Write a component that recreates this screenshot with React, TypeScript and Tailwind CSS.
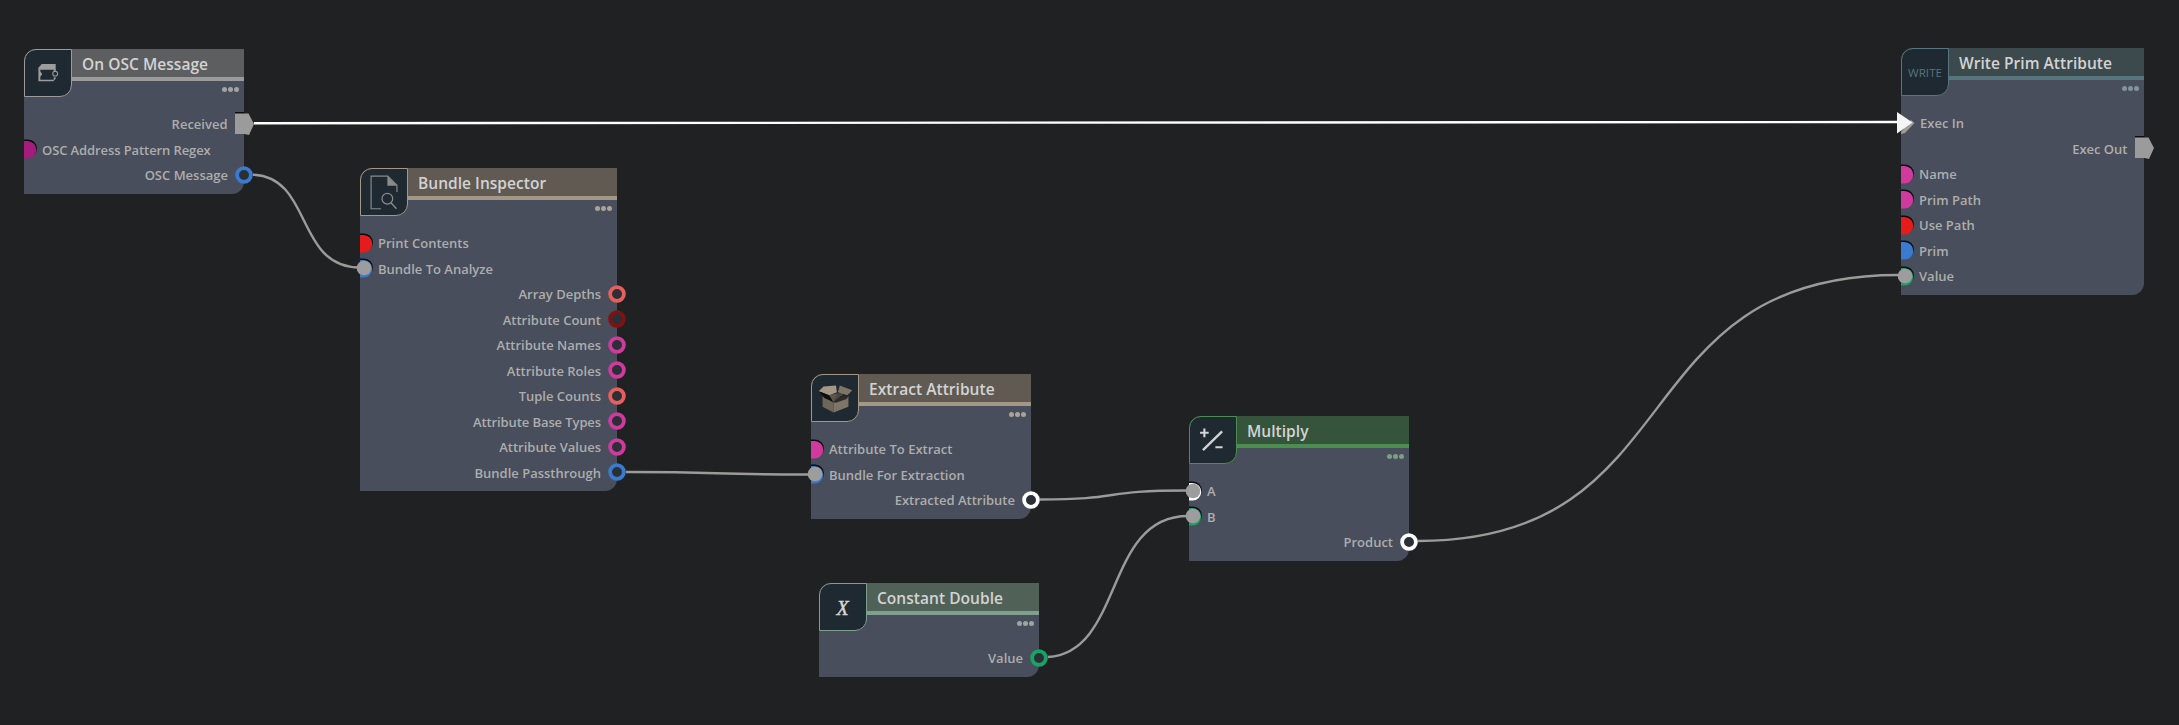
import React from "react";

type Port = {
  label: string;
  side: "in" | "out";
  color?: string;
  exec?: boolean;
  linked?: boolean;
  tight?: boolean;
};
type NodeDef = {
  title: string;
  place: string;
  head: string;
  strip: string;
  edge: string;
  dots: string;
  icon: React.ReactNode;
  ports: Port[];
};

const OscIcon = () => (
  <svg width="48" height="48" viewBox="0 0 48 48" fill="none">
    <path d="M14 18.500L17.500 14.500H32V20.500H14Z" fill="#9d9d9d" />
    <path d="M14 20H16V22.500L18 25L16 28V31H30V28.500H32V30L29.500 32.500H14Z" fill="#9d9d9d" />
    <path d="M30 20H32V22.500H30Z" fill="#9d9d9d" />
    <circle cx="31.500" cy="24.700" r="2.500" stroke="#9d9d9d" strokeWidth="1.100" />
  </svg>
);
const InspectIcon = () => (
  <svg width="48" height="48" viewBox="0 0 48 48" fill="none" stroke="#8b8b8b">
    <path d="M21 41.500H10.500V7.500H28L37.500 17V24" strokeWidth="1.200" />
    <path d="M27.500 7.500V17.500H37.500Z" fill="#8b8b8b" stroke="none" />
    <circle cx="27.500" cy="31" r="5.600" strokeWidth="1.300" />
    <path d="M31.500 35.500L37 41.500" strokeWidth="1.400" />
  </svg>
);
const BoxIcon = () => (
  <svg width="48" height="48" viewBox="0 0 48 48">
    <path d="M11 22L22.500 29V39L11 33Z" fill="#6f665a" />
    <path d="M22.500 29L38 22V33L22.500 39Z" fill="#7f7566" />
    <path d="M12 18L24 20L36 17L22.500 29Z" fill="#4b463f" />
    <path d="M7 17L12 12L25 11L26 18L18 21Z" fill="#a39885" />
    <path d="M29 11L42 16L37 21L27 18Z" fill="#7f7566" />
    <path d="M7 17L18 21L22 28L13 24Z" fill="#0e0e0e" />
    <path d="M18 21L27 19L22.500 28Z" fill="#5c554b" />
    <path d="M22.500 28L30 22L39 21L36 25L25 29Z" fill="#2d2a27" />
  </svg>
);
const MathIcon = () => (
  <svg width="48" height="48" viewBox="0 0 48 48" stroke="#d4d4d4" fill="none">
    <path d="M10.500 16.500H19.500M15 12V21M26.500 31.500H34" strokeWidth="2.200" />
    <path d="M13.500 34.500L33.500 15" strokeWidth="2.400" />
  </svg>
);

const nodes: NodeDef[] = [
  {
    title: "On OSC Message", place: "left-[24px] top-[49px] w-[220px] h-[145px]",
    head: "bg-[#5d5e5f]", strip: "bg-[#9b9b9b]", edge: "border-[#9b9b9b]", dots: "bg-[#a3a3a3]", icon: <OscIcon />,
    ports: [
      { label: "Received", side: "out", exec: true },
      { label: "OSC Address Pattern Regex", side: "in", color: "#a61c7c", tight: true },
      { label: "OSC Message", side: "out", color: "#3a7bd0" },
    ],
  },
  {
    title: "Bundle Inspector", place: "left-[360px] top-[168px] w-[257px] h-[323px]",
    head: "bg-[#605a53]", strip: "bg-[#a39885]", edge: "border-[#a39885]", dots: "bg-[#aaa498]", icon: <InspectIcon />,
    ports: [
      { label: "Print Contents", side: "in", color: "#e61c1c" },
      { label: "Bundle To Analyze", side: "in", color: "#3a7bd0", linked: true },
      { label: "Array Depths", side: "out", color: "#e65e5e" },
      { label: "Attribute Count", side: "out", color: "#7e1212" },
      { label: "Attribute Names", side: "out", color: "#cf3a9c" },
      { label: "Attribute Roles", side: "out", color: "#cf3a9c" },
      { label: "Tuple Counts", side: "out", color: "#e65e5e" },
      { label: "Attribute Base Types", side: "out", color: "#cf3a9c", tight: true },
      { label: "Attribute Values", side: "out", color: "#cf3a9c" },
      { label: "Bundle Passthrough", side: "out", color: "#3a7bd0" },
    ],
  },
  {
    title: "Extract Attribute", place: "left-[811px] top-[374px] w-[220px] h-[145px]",
    head: "bg-[#605a53]", strip: "bg-[#a39885]", edge: "border-[#a39885]", dots: "bg-[#aaa498]", icon: <BoxIcon />,
    ports: [
      { label: "Attribute To Extract", side: "in", color: "#cf3a9c" },
      { label: "Bundle For Extraction", side: "in", color: "#3a7bd0", linked: true },
      { label: "Extracted Attribute", side: "out", color: "#ffffff" },
    ],
  },
  {
    title: "Constant Double", place: "left-[819px] top-[583px] w-[220px] h-[94px]",
    head: "bg-[#506157]", strip: "bg-[#7fa08d]", edge: "border-[#7fa08d]", dots: "bg-[#98a89f]",
    icon: <span className="pt-[2px] pr-[1px] font-['Liberation_Serif',serif] text-[20px] italic text-[#d8d8d8] [-webkit-text-stroke:0.4px_#d8d8d8]">X</span>,
    ports: [{ label: "Value", side: "out", color: "#1aa367" }],
  },
  {
    title: "Multiply", place: "left-[1189px] top-[416px] w-[220px] h-[145px]",
    head: "bg-[#36533b]", strip: "bg-[#4c8d50]", edge: "border-[#4c8d50]", dots: "bg-[#7c9f84]", icon: <MathIcon />,
    ports: [
      { label: "A", side: "in", color: "#ffffff", linked: true },
      { label: "B", side: "in", color: "#1aa367", linked: true },
      { label: "Product", side: "out", color: "#ffffff" },
    ],
  },
  {
    title: "Write Prim Attribute", place: "left-[1901px] top-[48px] w-[243px] h-[247px]",
    head: "bg-[#3c4a4e]", strip: "bg-[#57757c]", edge: "border-[#57757c]", dots: "bg-[#82959c]",
    icon: <span className="pt-[2px] text-[11.500px] tracking-[0.100px] text-[#55757e]">WRITE</span>,
    ports: [
      { label: "Exec In", side: "in", exec: true },
      { label: "Exec Out", side: "out", exec: true },
      { label: "Name", side: "in", color: "#cf3a9c" },
      { label: "Prim Path", side: "in", color: "#cf3a9c" },
      { label: "Use Path", side: "in", color: "#e61c1c" },
      { label: "Prim", side: "in", color: "#3a7bd0" },
      { label: "Value", side: "in", color: "#1aa367", linked: true },
    ],
  },
];

function Pin({ port }: { port: Port }) {
  if (port.exec && port.side === "in")
    return (
      <svg className="-ml-1 h-6 w-[23px] shrink-0" viewBox="0 0 23 24">
        <path d="M4 21V23L8 22L17.500 12L14 9Z" fill="#a09c98" />
        <path d="M0 1L15.500 11.500L0 22.500Z" fill="#f4f4f4" />
      </svg>
    );
  if (port.exec)
    return (
      <svg className="-mr-[9.500px] h-6 w-[19px] shrink-0" viewBox="0 0 19 24">
        <path d="M0 0H9.500V2H0Z" fill="#0d0d0f" />
        <path d="M0 1.500H13.500L19 12L14 23L9.500 22H0Z" fill="#9b9b9b" />
      </svg>
    );
  if (port.side === "out")
    return (
      <svg className="-mr-[9px] h-[18px] w-[18px] shrink-0" viewBox="0 0 18 18">
        <circle cx="9" cy="9" r="6.900" fill="#2b3036" stroke={port.color} strokeWidth="3.800" />
      </svg>
    );
  return (
    <svg className="-ml-1 h-[22px] w-[22px] shrink-0" viewBox="0 0 22 22">
      <path d="M4 1.500H8A8.900 8.900 0 0 1 8 19.300H4Z" fill="#0b0b10" />
      <path d="M4 3H7.500A8.800 8.800 0 0 1 7.500 20.600H4Z" fill={port.color} />
      {port.linked && <circle cx="8" cy="11" r="7.300" fill="#9d9d9d" />}
    </svg>
  );
}

function GraphNode({ node }: { node: NodeDef }) {
  return (
    <section className={`absolute flex flex-col rounded-tl-[12px] rounded-br-[12px] bg-[#484e5b] ${node.place}`}>
      <div className="flex h-[62px] shrink-0">
        <div className={`flex size-12 shrink-0 items-center justify-center rounded-tl-[12px] rounded-br-[12px] border bg-[#1f2931] ${node.edge}`}>
          {node.icon}
        </div>
        <div className="flex flex-1 flex-col">
          <h2 className={`h-7 pl-[10px] text-[15.500px] leading-[30px] font-semibold tracking-[0.040px] whitespace-nowrap text-[#d3d3d3] ${node.head}`}>{node.title}</h2>
          <div className={`h-1 ${node.strip}`} />
          <div className="mt-[6px] mr-[5.500px] flex justify-end gap-[1px]">
            <i className={`size-[5px] rounded-full ${node.dots}`} />
            <i className={`size-[5px] rounded-full ${node.dots}`} />
            <i className={`size-[5px] rounded-full ${node.dots}`} />
          </div>
        </div>
      </div>
      {node.ports.map((p) => (
        <div key={p.label} className={`flex h-[25.500px] shrink-0 items-center ${p.side === "out" ? "flex-row-reverse gap-[7px]" : ""}`}>
          <Pin port={p} />
          <span className={`mt-[0.600px] text-[13px] leading-5 font-semibold whitespace-nowrap text-[#adadad] ${p.tight ? "tracking-[-0.100px]" : ""}`}>{p.label}</span>
        </div>
      ))}
    </section>
  );
}

export default function App() {
  return (
    <main className="relative h-[725px] w-[2179px] overflow-hidden bg-[#202123] font-['Open_Sans',sans-serif]">
      {nodes.map((n) => (
        <GraphNode key={n.title} node={n} />
      ))}
      <svg className="absolute inset-0" width="2179" height="725" fill="none" stroke="#9b9b9b" strokeWidth="2.400">
        <path d="M254 123.200L1898 122" stroke="#ffffff" />
        <path d="M253 174.700C313 177 295 267.500 360 267.500" />
        <path d="M626 472C731 472 701 474.500 808 474.500" />
        <path d="M1040 499.500C1124 499.500 1100 490.500 1186 490.500" />
        <path d="M1048 657C1124 652 1104 516 1188 516" />
        <path d="M1418 541C1694 541 1620 275 1898 275" />
      </svg>
    </main>
  );
}
